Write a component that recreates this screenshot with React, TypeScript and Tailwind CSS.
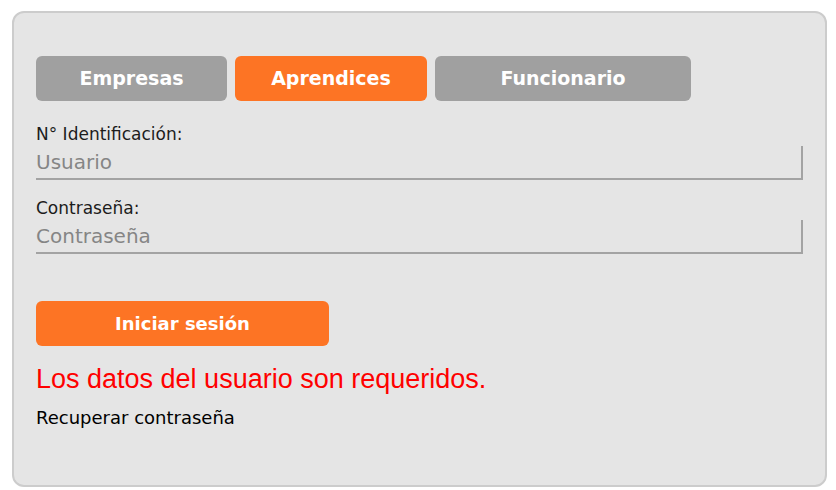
import React, { useState } from "react";

const tabs = [
  { name: "Empresas", width: "w-[191px]" },
  { name: "Aprendices", width: "w-[192px]" },
  { name: "Funcionario", width: "w-[256px]" },
];

const App = () => {
  const [active, setActive] = useState("Aprendices");

  return (
    <div className="min-h-[490px] bg-white pt-[11px] pl-[12px] font-['DejaVu_Sans',sans-serif]">
      <section className="w-[815px] h-[476px] bg-[#e5e5e5] border-2 border-[#cccccc] rounded-[12px] pt-[43px] px-[22px]">
        <div className="flex gap-[8px]">
          {tabs.map((tab) => (
            <button
              key={tab.name}
              onClick={() => setActive(tab.name)}
              className={`${tab.width} h-[45px] rounded-[6px] text-white text-[19px] font-semibold ${
                active === tab.name ? "bg-[#fd7424]" : "bg-[#a0a0a0]"
              }`}
            >
              {tab.name}
            </button>
          ))}
        </div>

        <div className="mt-[22px] w-[767px]">
          <label className="block text-[17px] leading-[22px] text-[#1c1c1c]">N° Identificación:</label>
          <input
            placeholder="Usuario"
            className="w-full h-[34px] mt-[1px] bg-transparent border-b-2 border-r-2 border-[#a3a3a3] text-[20px] placeholder:text-[#858585] outline-none"
          />

          <label className="block mt-[17px] text-[17px] leading-[22px] text-[#1c1c1c]">Contraseña:</label>
          <input
            type="password"
            placeholder="Contraseña"
            className="w-full h-[34px] mt-[1px] bg-transparent border-b-2 border-r-2 border-[#a3a3a3] text-[20px] placeholder:text-[#858585] outline-none"
          />
        </div>

        <button className="mt-[47px] w-[293px] h-[45px] rounded-[6px] bg-[#fd7424] text-white text-[18px] font-semibold">
          Iniciar sesión
        </button>

        <p className="mt-[18px] text-[27px] leading-[31px] text-[#ff0000] font-['Liberation_Sans',Arial,sans-serif]">
          Los datos del usuario son requeridos.
        </p>

        <p className="mt-[13px] text-[18px] leading-[20px] text-black">Recuperar contraseña</p>
      </section>
    </div>
  );
};

export default App;
